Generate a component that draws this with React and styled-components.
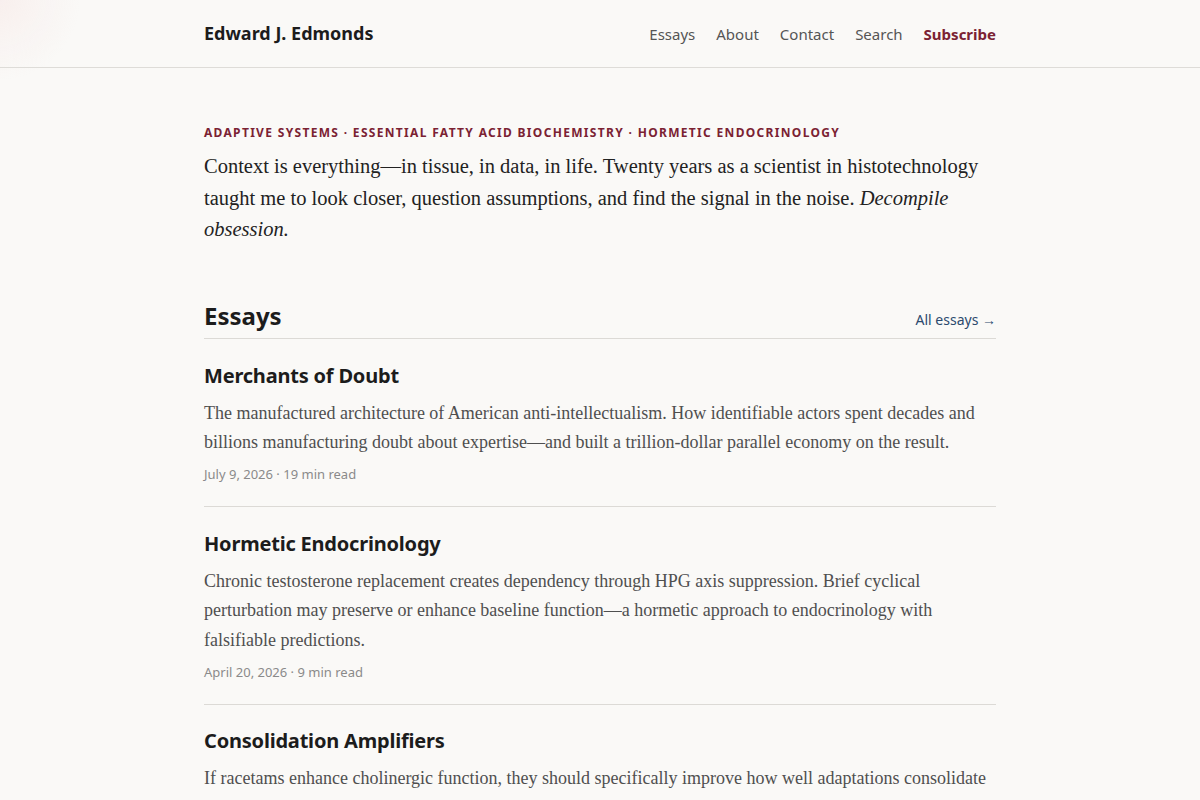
import React from "react";
import styled, { createGlobalStyle } from "styled-components";

const GlobalStyle = createGlobalStyle`
  html, body {
    margin: 0;
    padding: 0;
    background: #faf9f7;
    color: #1c1c1c;
  }
  body {
    font-family: "Noto Sans", "Open Sans", sans-serif;
  }
  a {
    text-decoration: none;
  }
`;

const Page = styled.div`
  min-height: 800px;
  background: radial-gradient(circle at 0 0, rgba(240, 200, 200, 0.2), rgba(250, 249, 247, 0) 80px), #faf9f7;
`;

const Header = styled.header`
  border-bottom: 1px solid #dedcd8;
`;

const Wrap = styled.div`
  width: 792px;
  margin: 0 auto;
`;

const HeaderInner = styled(Wrap)`
  height: 67px;
  display: flex;
  align-items: center;
  justify-content: space-between;
`;

const Brand = styled.a`
  font-size: 18px;
  font-weight: 700;
  color: #1c1c1c;
  line-height: 24px;
  margin-top: -2px;
`;

const Nav = styled.nav`
  display: flex;
  gap: 21px;
  align-items: center;
`;

const NavLink = styled.a`
  font-size: 15px;
  line-height: 22px;
  color: ${(p) => (p.$accent ? "#7b2233" : "#555")};
  font-weight: ${(p) => (p.$accent ? 700 : 400)};
`;

const Main = styled(Wrap)`
  padding-top: 56px;
`;

const Tags = styled.div`
  font-size: 12px;
  font-weight: 700;
  letter-spacing: 0.11em;
  text-transform: uppercase;
  color: #7b2233;
  line-height: 18px;
`;

const Intro = styled.p`
  margin: 9px 0 0;
  font-family: "Liberation Serif", "Times New Roman", serif;
  font-size: 20.5px;
  line-height: 31.5px;
  color: #222;
  em {
    font-style: italic;
  }
`;

const SectionHead = styled.div`
  margin-top: 54px;
  display: flex;
  justify-content: space-between;
  align-items: flex-end;
  padding-bottom: 6px;
  border-bottom: 1px solid #dcdad6;
`;

const SectionTitle = styled.h2`
  margin: 0;
  font-size: 24px;
  font-weight: 700;
  line-height: 32px;
  color: #1c1c1c;
`;

const AllLink = styled.a`
  font-size: 14px;
  color: #2c4a6e;
  line-height: 20px;
  margin-bottom: 2px;
`;

const Article = styled.article`
  padding: 23.5px 0 22px;
  border-bottom: 1px solid #dcdad6;

  &:first-of-type {
    padding-top: 24px;
  }
`;

const ArticleTitle = styled.h3`
  margin: 0;
  font-size: 20px;
  font-weight: 700;
  line-height: 26px;
  color: #1c1c1c;
  letter-spacing: -0.01em;
`;

const Excerpt = styled.p`
  margin: 10px 0 0;
  font-family: "Liberation Serif", "Times New Roman", serif;
  font-size: 18px;
  line-height: 29.6px;
  color: #4f4f4f;
`;

const Meta = styled.div`
  margin-top: 6.5px;
  font-size: 13px;
  line-height: 20px;
  color: #8a8a8a;
`;

const essays = [
  {
    title: "Merchants of Doubt",
    excerpt:
      "The manufactured architecture of American anti-intellectualism. How identifiable actors spent decades and billions manufacturing doubt about expertise—and built a trillion-dollar parallel economy on the result.",
    meta: "July 9, 2026 · 19 min read",
  },
  {
    title: "Hormetic Endocrinology",
    excerpt:
      "Chronic testosterone replacement creates dependency through HPG axis suppression. Brief cyclical perturbation may preserve or enhance baseline function—a hormetic approach to endocrinology with falsifiable predictions.",
    meta: "April 20, 2026 · 9 min read",
  },
  {
    title: "Consolidation Amplifiers",
    excerpt:
      "If racetams enhance cholinergic function, they should specifically improve how well adaptations consolidate after training and cognitive work.",
    meta: "March 2, 2026 · 12 min read",
  },
];

export default function App() {
  return (
    <Page>
      <GlobalStyle />
      <Header>
        <HeaderInner>
          <Brand href="#">Edward J. Edmonds</Brand>
          <Nav>
            <NavLink href="#">Essays</NavLink>
            <NavLink href="#">About</NavLink>
            <NavLink href="#">Contact</NavLink>
            <NavLink href="#">Search</NavLink>
            <NavLink href="#" $accent>
              Subscribe
            </NavLink>
          </Nav>
        </HeaderInner>
      </Header>
      <Main>
        <Tags>
          Adaptive Systems · Essential Fatty Acid Biochemistry · Hormetic Endocrinology
        </Tags>
        <Intro>
          Context is everything—in tissue, in data, in life. Twenty years as a
          scientist in histotechnology taught me to look closer, question
          assumptions, and find the signal in the noise. <em>Decompile obsession.</em>
        </Intro>
        <SectionHead>
          <SectionTitle>Essays</SectionTitle>
          <AllLink href="#">All essays →</AllLink>
        </SectionHead>
        {essays.map((e) => (
          <Article key={e.title}>
            <ArticleTitle>{e.title}</ArticleTitle>
            <Excerpt>{e.excerpt}</Excerpt>
            <Meta>{e.meta}</Meta>
          </Article>
        ))}
      </Main>
    </Page>
  );
}
